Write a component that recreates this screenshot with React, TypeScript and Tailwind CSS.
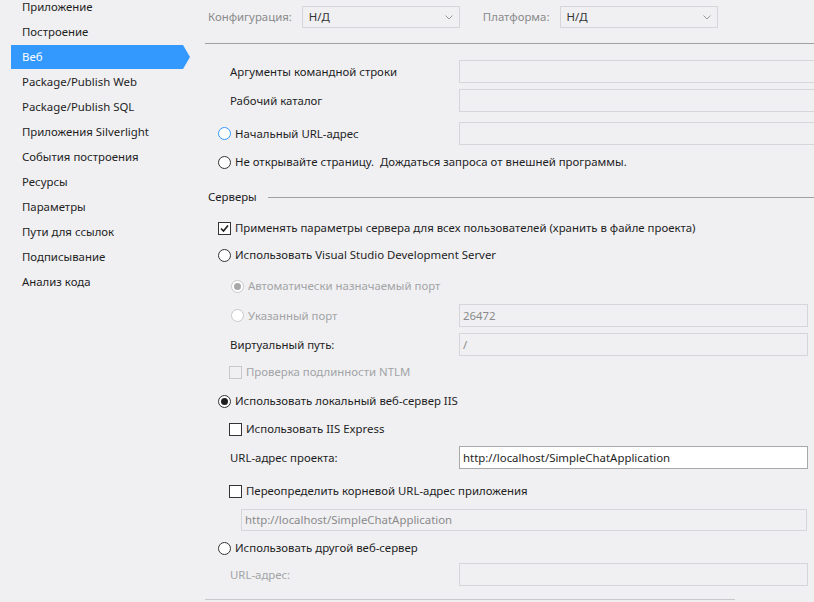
import React from "react";

const font = { fontFamily: '"Noto Sans", "Liberation Sans", sans-serif' };

const navItems = [
  "Приложение",
  "Построение",
  "Веб",
  "Package/Publish Web",
  "Package/Publish SQL",
  "Приложения Silverlight",
  "События построения",
  "Ресурсы",
  "Параметры",
  "Пути для ссылок",
  "Подписывание",
  "Анализ кода",
];

function Radio({ checked, disabled, focus }: { checked?: boolean; disabled?: boolean; focus?: boolean }) {
  return (
    <span
      className={
        "w-[13px] h-[13px] rounded-full border grid place-items-center shrink-0 bg-white " +
        (disabled ? "border-[#c8c8c8] bg-[#f0f0f3]" : focus ? "border-[#3399ff]" : "border-[#333]")
      }
    >
      {checked && <span className={"w-[7px] h-[7px] rounded-full " + (disabled ? "bg-[#a8a8a8]" : "bg-[#1e1e1e]")} />}
    </span>
  );
}

function Check({ checked, disabled }: { checked?: boolean; disabled?: boolean }) {
  return (
    <span
      className={
        "w-[13px] h-[13px] border grid place-items-center shrink-0 " +
        (disabled ? "border-[#c8c8c8] bg-[#f0f0f3]" : "border-[#333] bg-white")
      }
    >
      {checked && (
        <svg width="9" height="9" viewBox="0 0 9 9">
          <path d="M1 4.5 L3.5 7 L8 1.5" fill="none" stroke="#1e1e1e" strokeWidth="1.6" />
        </svg>
      )}
    </span>
  );
}

function Field({ value, white, wide }: { value?: string; white?: boolean; wide?: boolean }) {
  return (
    <div
      className={
        "h-full border flex items-center px-[3px] text-[11.4px] " +
        (wide ? "w-[566px] " : "w-[349px] ") +
        (white ? "bg-white border-[#a9a9a9] text-[#1e1e1e]" : "bg-[#f0f0f3] border-[#d6d6da] text-[#8a8a8a]")
      }
    >
      {value}
    </div>
  );
}

function Select({ label, x }: { label: string; x: string }) {
  return (
    <div className={"flex items-center " + x}>
      <span className="text-[#8a8a8a] mr-[10px]">{label}</span>
      <div className="w-[158px] h-[22px] border border-[#d6d6da] flex items-center justify-between px-[6px] text-[#333]">
        <span>Н/Д</span>
        <svg width="8" height="5" viewBox="0 0 8 5">
          <path d="M0.5 0.5 L4 4 L7.5 0.5" fill="none" stroke="#9a9a9a" strokeWidth="1" />
        </svg>
      </div>
    </div>
  );
}

export default function App() {
  return (
    <div className="w-[814px] h-[602px] bg-[#f0f0f3] flex overflow-hidden text-[#1e1e1e] text-[11.4px]" style={font}>
      {/* sidebar */}
      <div className="w-[205px] shrink-0 mt-[-6px]">
        {navItems.map((item) =>
          item === "Веб" ? (
            <div key={item} className="relative h-[25px] flex items-center">
              <div className="ml-[11px] w-[172px] h-[24px] bg-[#3399ff] text-white flex items-center pl-[11px]">{item}</div>
              <div className="w-0 h-0 border-y-[12px] border-y-transparent border-l-[7px] border-l-[#3399ff]" />
            </div>
          ) : (
            <div key={item} className="h-[25px] flex items-center pl-[22px]">
              {item}
            </div>
          )
        )}
      </div>

      {/* main */}
      <div className="flex-1 flex flex-col">
        <div className="h-[44px] shrink-0 border-b border-[#a0a0a0] flex items-start pt-[6px]">
          <Select label="Конфигурация:" x="ml-[3px]" />
          <Select label="Платформа:" x="ml-[23px]" />
        </div>

        <div className="flex items-center h-[23px] mt-[16px]">
          <span className="pl-[25px] w-[254px]">Аргументы командной строки</span>
          <Field wide />
        </div>
        <div className="flex items-center h-[23px] mt-[6px]">
          <span className="pl-[25px] w-[254px]">Рабочий каталог</span>
          <Field wide />
        </div>
        <div className="flex items-center h-[23px] mt-[10px]">
          <div className="pl-[13px] w-[254px] flex items-center gap-[4px]">
            <Radio focus />
            <span>Начальный URL-адрес</span>
          </div>
          <Field wide />
        </div>
        <div className="flex items-center h-[22px] mt-[6px] pl-[13px] gap-[4px]">
          <Radio />
          <span>Не открывайте страницу.&nbsp; Дождаться запроса от внешней программы.</span>
        </div>

        <div className="flex items-center h-[22px] mt-[13px] pl-[3px]">
          <span>Серверы</span>
          <div className="flex-1 h-px bg-[#a0a0a0] ml-[11px]" />
        </div>

        <div className="flex items-center h-[22px] mt-[9px] pl-[13px] gap-[4px]">
          <Check checked />
          <span>Применять параметры сервера для всех пользователей (хранить в файле проекта)</span>
        </div>
        <div className="flex items-center h-[22px] mt-[5px] pl-[13px] gap-[4px]">
          <Radio />
          <span>Использовать Visual Studio Development Server</span>
        </div>
        <div className="flex items-center h-[22px] mt-[9px] pl-[26px] gap-[4px] text-[#a2a4a5]">
          <Radio checked disabled />
          <span>Автоматически назначаемый порт</span>
        </div>
        <div className="flex items-center h-[23px] mt-[7px]">
          <div className="pl-[26px] w-[254px] flex items-center gap-[4px] text-[#a2a4a5]">
            <Radio disabled />
            <span>Указанный порт</span>
          </div>
          <Field value="26472" />
        </div>
        <div className="flex items-center h-[23px] mt-[6px]">
          <span className="pl-[25px] w-[254px]">Виртуальный путь:</span>
          <Field value="/" />
        </div>
        <div className="flex items-center h-[22px] mt-[5px] pl-[24px] gap-[4px] text-[#a2a4a5]">
          <Check disabled />
          <span>Проверка подлинности NTLM</span>
        </div>
        <div className="flex items-center h-[22px] mt-[7px] pl-[13px] gap-[4px]">
          <Radio checked />
          <span>Использовать локальный веб-сервер IIS</span>
        </div>
        <div className="flex items-center h-[22px] mt-[6px] pl-[24px] gap-[4px]">
          <Check />
          <span>Использовать IIS Express</span>
        </div>
        <div className="flex items-center h-[23px] mt-[6px]">
          <span className="pl-[25px] w-[254px]">URL-адрес проекта:</span>
          <Field value="http://localhost/SimpleChatApplication" white />
        </div>
        <div className="flex items-center h-[22px] mt-[11px] pl-[24px] gap-[4px]">
          <Check />
          <span>Переопределить корневой URL-адрес приложения</span>
        </div>
        <div className="flex items-center h-[22px] mt-[7px] pl-[36px]">
          <Field value="http://localhost/SimpleChatApplication" wide />
        </div>
        <div className="flex items-center h-[22px] mt-[6px] pl-[13px] gap-[4px]">
          <Radio />
          <span>Использовать другой веб-сервер</span>
        </div>
        <div className="flex items-center h-[23px] mt-[4px]">
          <span className="pl-[25px] w-[254px] text-[#a2a4a5]">URL-адрес:</span>
          <Field />
        </div>
        <div className="mt-[13px] w-[530px] h-px bg-[#c8c8cc]" />
      </div>
    </div>
  );
}
